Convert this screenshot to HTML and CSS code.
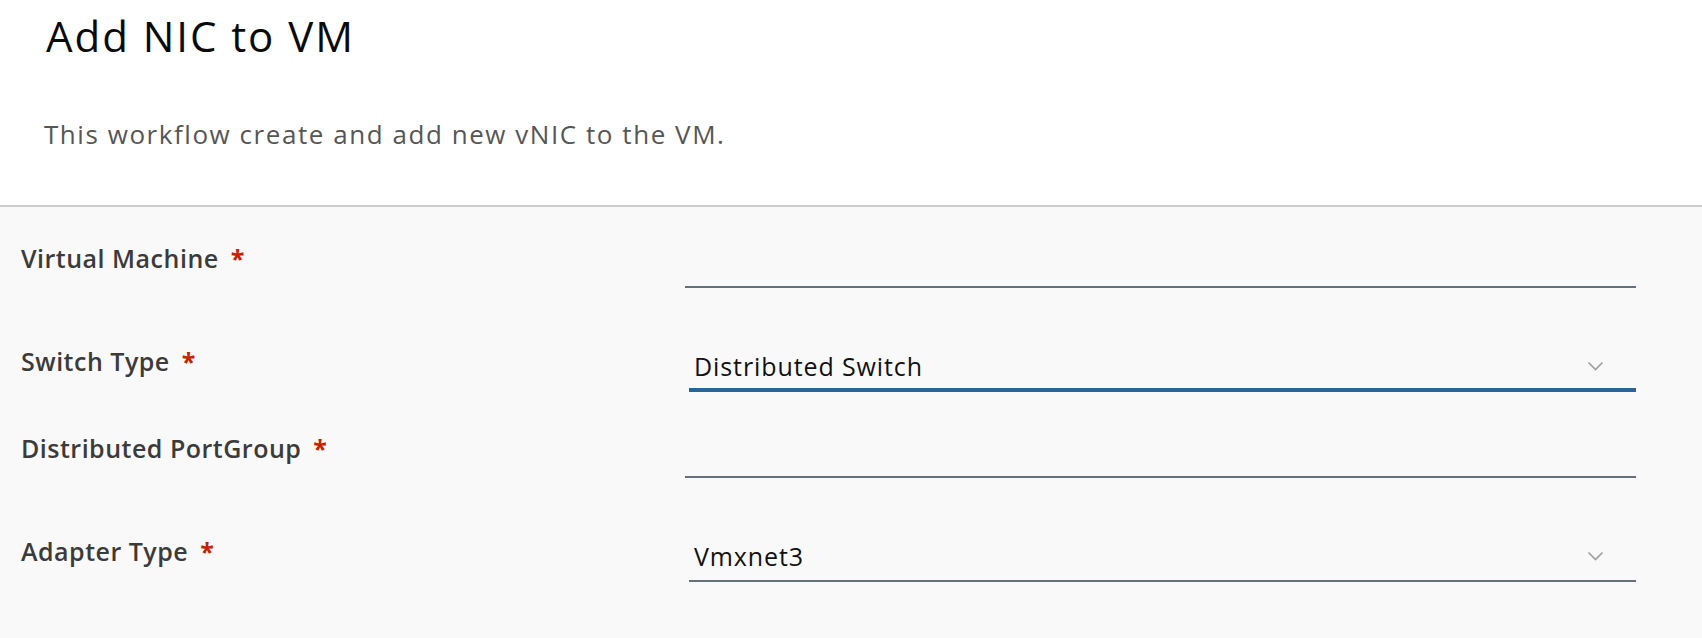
FILE: index.html
```html
<!DOCTYPE html>
<html lang="en">
<head>
<meta charset="utf-8">
<title>Add NIC to VM</title>
<link rel="stylesheet" href="styles.css">
</head>
<body>
<div class="page">
  <header class="head">
    <h1 class="title">Add NIC to VM</h1>
    <p class="desc">This workflow create and add new vNIC to the VM.</p>
  </header>
  <form class="form">
    <div class="row row-input">
      <label class="label">Virtual Machine<span class="req">*</span></label>
      <div class="input"></div>
    </div>
    <div class="row row-select">
      <label class="label">Switch Type<span class="req">*</span></label>
      <div class="select select-focus">
        <span class="value">Distributed Switch</span>
        <svg class="chev" width="17" height="10" viewBox="0 0 17 10"><polyline points="1.5,1.5 8.5,8.5 15.5,1.5" fill="none" stroke="#a0a0a0" stroke-width="1.7"/></svg>
      </div>
    </div>
    <div class="row row-input">
      <label class="label">Distributed PortGroup<span class="req">*</span></label>
      <div class="input"></div>
    </div>
    <div class="row row-select">
      <label class="label">Adapter Type<span class="req">*</span></label>
      <div class="select">
        <span class="value">Vmxnet3</span>
        <svg class="chev" width="17" height="10" viewBox="0 0 17 10"><polyline points="1.5,1.5 8.5,8.5 15.5,1.5" fill="none" stroke="#a0a0a0" stroke-width="1.7"/></svg>
      </div>
    </div>
  </form>
</div>
</body>
</html>
```

FILE: styles.css
```css
html, body {
  margin: 0;
  padding: 0;
  height: 100%;
}
body {
  font-family: "Open Sans", "Liberation Sans", sans-serif;
  background: #f9f9f9;
}
.page {
  min-height: 100%;
  background: #f9f9f9;
}
.head {
  background: #ffffff;
  padding: 11px 0 53px 44px;
  border-bottom: 2px solid #cccccc;
}
.title {
  margin: 0 0 0 2px;
  font-size: 42px;
  line-height: 50px;
  font-weight: 400;
  letter-spacing: 1.95px;
  color: #0a0a0a;
}
.desc {
  margin: 55px 0 0 0;
  font-size: 26px;
  line-height: 36px;
  letter-spacing: 1.55px;
  color: #565656;
}
.form {
  padding: 35px 0 0 21px;
}
.row {
  display: grid;
  grid-template-columns: 664px 951px;
  align-items: start;
}
.row-input {
  padding-bottom: 57px;
}
.row-select {
  padding-bottom: 40px;
}
.label {
  font-size: 25px;
  line-height: 32px;
  font-weight: 600;
  letter-spacing: 0.5px;
  color: #3b3b3b;
}
.req {
  margin-left: 12px;
  color: #c92100;
  font-weight: 700;
}
.input {
  box-sizing: border-box;
  height: 46px;
  border-bottom: 2px solid #65707a;
}
.select {
  display: flex;
  align-items: center;
  justify-content: space-between;
  margin-left: 4px;
  padding: 5px 32px 8px 5px;
  border-bottom: 2px solid #65707a;
}
.select-focus {
  padding-bottom: 6px;
  border-bottom: 4px solid #2b6496;
}
.value {
  font-size: 25px;
  line-height: 32px;
  letter-spacing: 0.9px;
  color: #111111;
}
.chev {
  display: block;
}
```
